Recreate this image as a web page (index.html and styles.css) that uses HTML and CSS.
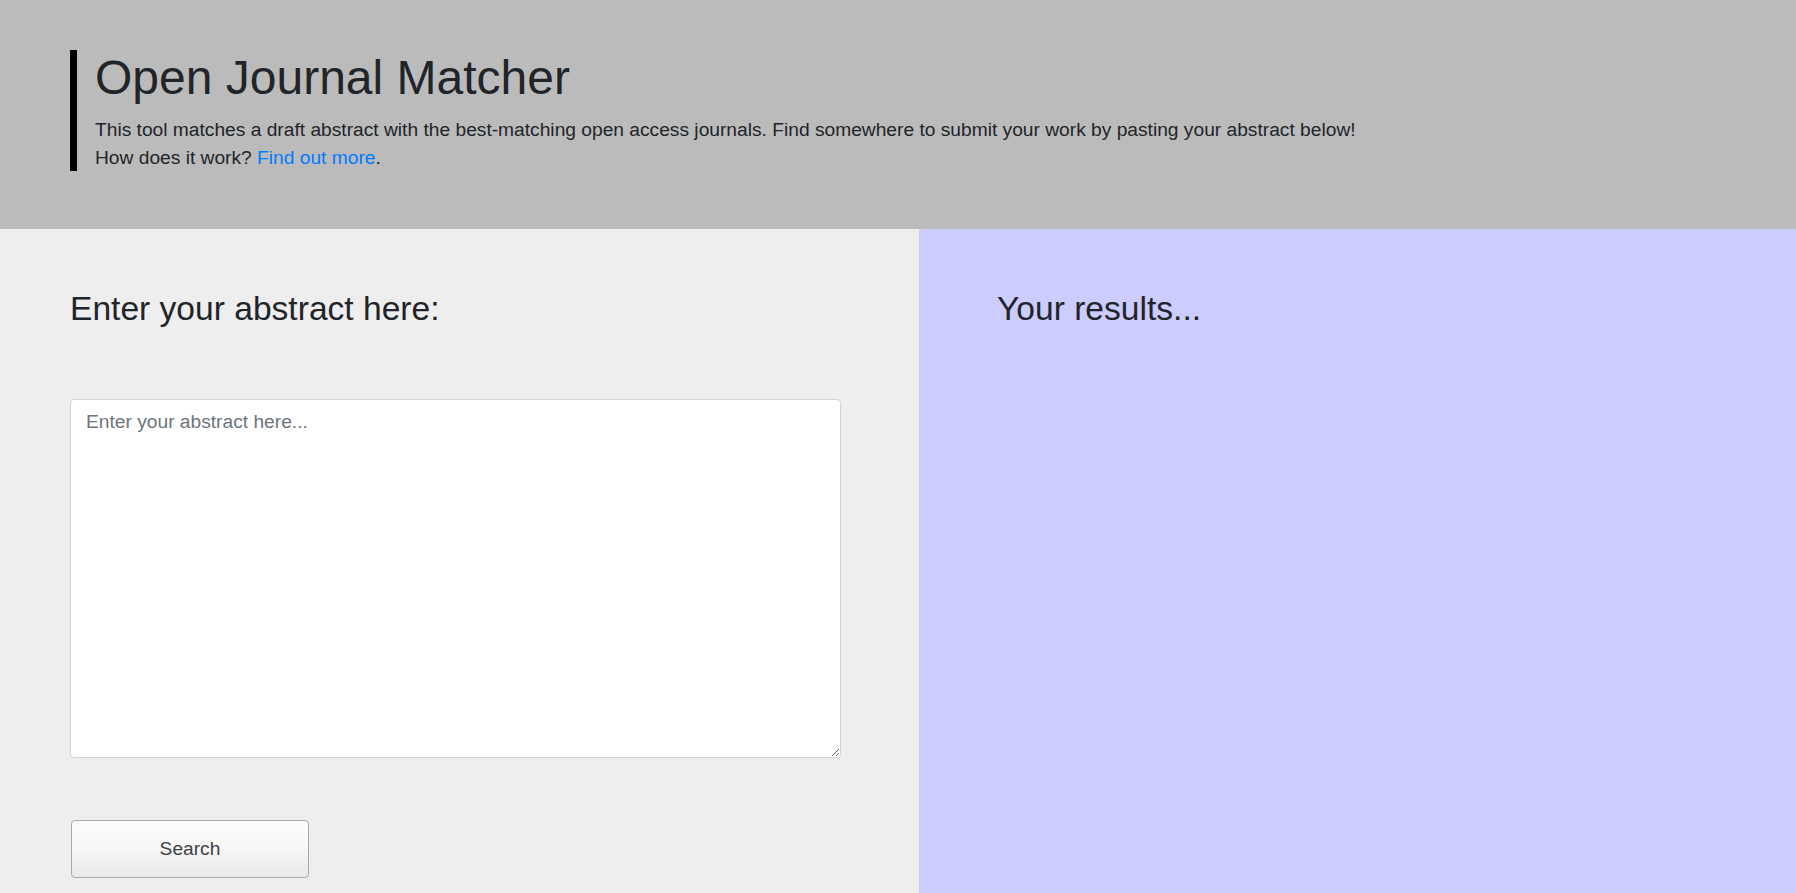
FILE: index.html
```html
<!DOCTYPE html>
<html lang="en">
<head>
<meta charset="utf-8">
<title>Open Journal Matcher</title>
<link rel="stylesheet" href="styles.css">
</head>
<body>
<div class="page">
  <header class="header">
    <div class="intro">
      <h1 class="title">Open Journal Matcher</h1>
      <p class="lead">This tool matches a draft abstract with the best-matching open access journals. Find somewhere to submit your work by pasting your abstract below!<br>How does it work? <a href="#" class="link">Find out more</a>.</p>
    </div>
  </header>
  <main class="main">
    <section class="panel panel-input">
      <h2 class="panel-title">Enter your abstract here:</h2>
      <textarea class="abstract" placeholder="Enter your abstract here..."></textarea>
      <button class="search-btn" type="button">Search</button>
    </section>
    <section class="panel panel-results">
      <h2 class="panel-title">Your results...</h2>
    </section>
  </main>
</div>
</body>
</html>
```

FILE: styles.css
```css
* { box-sizing: border-box; }

html, body {
  margin: 0;
  padding: 0;
}

body {
  font-family: "Liberation Sans", Arial, sans-serif;
  color: #212529;
  font-size: 19.2px;
  line-height: 1.5;
}

.page {
  min-height: 100vh;
  display: flex;
  flex-direction: column;
}

.header {
  background: #bbbbbb;
  padding: 50px 70px 58px 70px;
}

.intro {
  border-left: 7px solid #000;
  padding-left: 18px;
}

.title {
  margin: 0 0 11px 0;
  font-size: 48px;
  font-weight: 400;
  line-height: 55px;
}

.lead {
  margin: 0;
  font-size: 19.2px;
  line-height: 27.5px;
}

.link {
  color: #007bff;
  text-decoration: none;
}

.main {
  flex: 1;
  display: grid;
  grid-template-columns: 919px 1fr;
}

.panel {
  padding: 60px 78px 16px 70px;
  display: flex;
  flex-direction: column;
  align-items: flex-start;
}

.panel-input {
  background: #eeeeee;
}

.panel-results {
  background: #ccccff;
  padding-left: 78px;
}

.panel-title {
  margin: 0;
  font-size: 33.6px;
  font-weight: 400;
  line-height: 40px;
}

.abstract {
  margin-top: 70px;
  width: 771px;
  height: 359px;
  border: 1px solid #ced4da;
  border-radius: 4px;
  background: #fff;
  padding: 8px 15px;
  font-family: "Liberation Sans", Arial, sans-serif;
  font-size: 19.2px;
  line-height: 1.5;
  color: #495057;
  resize: both;
}

.abstract::placeholder {
  color: #6c757d;
  opacity: 1;
}

.search-btn {
  margin-top: 62px;
  margin-left: 1px;
  width: 238px;
  height: 58px;
  border: 1px solid #a8a8a8;
  border-radius: 4px;
  background: linear-gradient(to bottom, #fefefe 0%, #f7f6f5 50%, #ebe9e7 100%);
  font-family: "Liberation Sans", Arial, sans-serif;
  font-size: 19.2px;
  color: #3e4247;
  cursor: pointer;
}
```
